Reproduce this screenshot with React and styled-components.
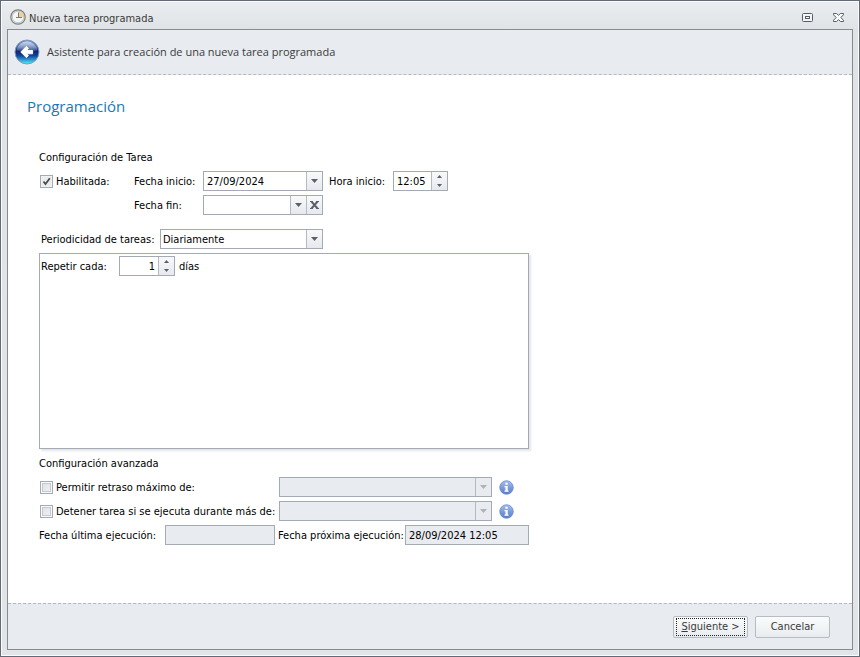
import React, { useState } from "react";
import styled, { createGlobalStyle } from "styled-components";

const GlobalStyle = createGlobalStyle`
  * {
    box-sizing: border-box;
  }
  body {
    margin: 0;
  }
  body, input, select, button {
    font-family: "DejaVu Sans Condensed", "DejaVu Sans", sans-serif;
    font-size: 11px;
    color: #000;
  }
`;

const Window = styled.div`
  display: flex;
  flex-direction: column;
  min-height: 100vh;
  padding: 0 6px 6px;
  border: 1px solid #646b78;
  box-shadow: inset 0 0 0 1px #fbfbfc;
  background: linear-gradient(#ebedf0, #dfe3e6 30px, #e1e5e8);
`;

const TitleBar = styled.div`
  display: flex;
  align-items: center;
  height: 28px;
  padding: 4px 9px 0 3px;
  gap: 3px;
`;

const Title = styled.h1`
  flex: 1;
  margin: 0;
  padding-top: 3px;
  font-size: 11px;
  font-weight: 400;
  line-height: 16px;
  color: #3b3b3b;
`;

const WindowButton = styled.button`
  display: flex;
  padding: 0;
  margin-left: 17px;
  border: 0;
  background: none;
`;

const Frame = styled.div`
  flex: 1;
  display: flex;
  flex-direction: column;
  border: 1px solid #868b90;
  background: #fff;
`;

const Header = styled.header`
  display: flex;
  align-items: center;
  gap: 7px;
  height: 45px;
  padding: 0 6px;
  border-bottom: 1px dashed #b4b8c8;
  background: #e8ebf0;
  font: 11px/18px "Open Sans", sans-serif;
  color: #3b3b3b;
`;

const BackButton = styled.button`
  display: flex;
  padding: 0;
  border: 0;
  background: none;
`;

const Content = styled.main`
  flex: 1;
  padding: 19px;
`;

const Heading = styled.h2`
  margin: 0 0 32px;
  font: 400 15px/24px "Open Sans", sans-serif;
  color: #1979b5;
`;

const Form = styled.form`
  max-width: 502px;
  padding-left: 12px;
`;

const GroupTitle = styled.h3`
  margin: 0 0 5px;
  font-size: 11px;
  font-weight: 400;
  line-height: 16px;
`;

const Row = styled.div`
  display: flex;
  align-items: center;
  height: 20px;
  margin-bottom: ${(p) => p.$bottom ?? 4}px;
  padding-left: ${(p) => p.$indent || 0}px;
  white-space: nowrap;
`;

const Label = styled.label`
  flex: none;
  width: ${(p) => (p.$width ? `${p.$width}px` : "auto")};
  margin-left: ${(p) => p.$gap || 0}px;
  padding-top: 2px;
  line-height: 16px;
`;

const CheckLabel = styled.label`
  display: flex;
  flex: none;
  align-items: center;
  gap: 3px;
  width: ${(p) => p.$width}px;
  padding-left: 1px;
`;

const Check = styled.input`
  appearance: none;
  flex: none;
  width: 13px;
  height: 13px;
  margin: 0;
  border: 1px solid #a3abb7;
  background: linear-gradient(135deg, #dcdddf, #f4f4f4);
  box-shadow: inset 0 0 0 1px #f8f9fa, inset 0 0 0 2px #c6c9cd;

  &:checked {
    background: url("data:image/svg+xml,%3Csvg xmlns='http://www.w3.org/2000/svg' viewBox='0 0 11 11'%3E%3Cpath d='M2.5 5.5L4.5 8L8.8 2.3' fill='none' stroke='%23484b50' stroke-width='1.8'/%3E%3C/svg%3E")
        center / 11px 11px no-repeat,
      #ebecee;
    box-shadow: inset 0 0 0 1px #f1f2f4;
  }
`;

const Field = styled.div`
  display: flex;
  flex: none;
  width: ${(p) => p.$width}px;
  height: 20px;
  border: 1px solid #a3a9b5;
  background: ${(p) => (p.$disabled ? "#e8ebf0" : "#fff")};
`;

const Input = styled.input`
  flex: 1;
  min-width: 0;
  padding: 0 3px;
  border: 0;
  outline: 0;
  background: none;
  text-align: ${(p) => p.$align || "left"};
`;

const Select = styled.select`
  appearance: none;
  flex: 1;
  min-width: 0;
  padding: 0 2px;
  border: 0;
  outline: 0;
  background: none;
`;

const Cell = styled.button`
  display: flex;
  align-items: center;
  justify-content: center;
  flex: none;
  width: 16px;
  padding: 0;
  border: 0;
  border-left: 1px solid #b4b9c2;
  background: ${(p) => (p.$disabled ? "none" : "linear-gradient(#f8f9fb, #e6e9ed)")};
  color: ${(p) => (p.$disabled ? "#aeb3ba" : "#5b616b")};
`;

const Spin = styled.div`
  display: flex;
  flex-direction: column;
  width: 16px;
  border-left: 1px solid #b4b9c2;
  background: linear-gradient(#f8f9fb, #e6e9ed);
`;

const SpinButton = styled.button`
  display: flex;
  align-items: center;
  justify-content: center;
  flex: 1;
  padding: 0;
  border: 0;
  background: none;
  color: #5b616b;
`;

const Panel = styled.section`
  height: 196px;
  margin-bottom: 7px;
  padding: 2px 1px;
  border: 1px solid #a3a9b5;
  box-shadow: 2px 2px 2px #e4e5e8;
`;

const InfoButton = styled.button`
  display: flex;
  margin: 1px 0 0 7px;
  padding: 0;
  border: 0;
  background: none;
`;

const Footer = styled.footer`
  display: flex;
  align-items: center;
  justify-content: flex-end;
  gap: 7px;
  height: 46px;
  padding: 0 22px 0 0;
  border-top: 1px dashed #b4b8be;
  background: #e8ebf0;
`;

const Button = styled.button`
  width: 75px;
  height: 22px;
  padding: 1px;
  border: 1px solid #b8bcc2;
  border-radius: 2px;
  background: linear-gradient(#fafbfc, #e9ecef);
  line-height: 16px;
  color: #3b3b3b;
`;

const FocusRing = styled.span`
  display: block;
  margin: 0 1px;
  border: 1px dotted #222;
`;

const Down = () => (
  <svg width="7" height="4" viewBox="0 0 7 4" aria-hidden="true">
    <path d="M0 0H7L3.5 4Z" fill="currentColor" />
  </svg>
);

const SpinArrow = ({ up }) => (
  <svg width="5" height="3" viewBox="0 0 5 3" aria-hidden="true">
    <path d={up ? "M0 3H5L2.5 0Z" : "M0 0H5L2.5 3Z"} fill="currentColor" />
  </svg>
);

const ClearIcon = () => (
  <svg width="9" height="8" viewBox="0 0 9 8" aria-hidden="true">
    <path d="M1.5 0.5L7.5 7.5M7.5 0.5L1.5 7.5" stroke="currentColor" strokeWidth="2" />
    <path d="M0 0.5H3M6 0.5H9M0 7.5H3M6 7.5H9" stroke="currentColor" />
  </svg>
);

const ClockIcon = () => (
  <svg width="16" height="16" viewBox="0 0 16 16" aria-hidden="true">
    <circle cx="8" cy="8" r="7.2" fill="#e4e5e6" stroke="#7c7c7c" strokeWidth="1.2" />
    <circle cx="8" cy="8" r="5.7" fill="#f4f6f8" stroke="#aeb2b8" strokeWidth="0.7" />
    <path d="M8 8V2.6A5.4 5.4 0 0 1 13.4 8Z" fill="#f4d189" />
    <path d="M8.5 3.5V8.5H12M6 8.5H8.5" fill="none" stroke="#5f7ea0" />
  </svg>
);

const BackIcon = () => (
  <svg width="26" height="26" viewBox="0 0 26 26" aria-hidden="true">
    <defs>
      <linearGradient id="orb" x1="0" y1="0" x2="0" y2="1">
        <stop offset="0" stopColor="#7a97c8" />
        <stop offset="0.3" stopColor="#3d60a8" />
        <stop offset="0.45" stopColor="#0b2270" />
        <stop offset="0.65" stopColor="#10439a" />
        <stop offset="1" stopColor="#4ff0ff" />
      </linearGradient>
      <linearGradient id="gloss" x1="0" y1="0" x2="0" y2="1">
        <stop offset="0" stopColor="#fff" stopOpacity="0.65" />
        <stop offset="1" stopColor="#fff" stopOpacity="0.1" />
      </linearGradient>
    </defs>
    <circle cx="13" cy="13" r="12" fill="url(#orb)" stroke="#8497bb" strokeWidth="1" />
    <path d="M2.5 11.5A10.6 10.6 0 0 1 23.5 11.5Q13 14 2.5 11.5Z" fill="url(#gloss)" />
    <path
      d="M6.8 13L12.4 7.4L14.4 9.4L12.6 11.4H18.6V14.8H12.6L14.4 16.6L12.4 18.6Z"
      fill="#fff"
      stroke="#fff"
      strokeLinejoin="round"
    />
  </svg>
);

const InfoIcon = () => (
  <svg width="15" height="15" viewBox="0 0 15 15" aria-hidden="true">
    <defs>
      <linearGradient id="info" x1="0" y1="0" x2="0" y2="1">
        <stop offset="0" stopColor="#a3bdee" />
        <stop offset="1" stopColor="#587bc9" />
      </linearGradient>
    </defs>
    <circle cx="7.5" cy="7.5" r="6.8" fill="url(#info)" stroke="#6686cb" strokeWidth="0.7" />
    <path d="M6.4 2.8H8.7V4.7H6.4ZM5.5 6H8.7V10.6H9.6V11.8H5.5V10.6H6.4V7.2H5.5Z" fill="#fff" />
  </svg>
);

const MaximizeIcon = () => (
  <svg width="11" height="9" viewBox="0 0 11 9" aria-hidden="true">
    <rect x="0.5" y="0.5" width="10" height="8" rx="1" fill="#f4f5f6" stroke="#565d67" />
    <rect x="3.5" y="3.5" width="4" height="2" fill="#fff" stroke="#565d67" />
  </svg>
);

const CloseIcon = () => (
  <svg width="11" height="9" viewBox="0 0 11 9" aria-hidden="true">
    <path
      d="M0.5 0.5H3.5L5.5 2.3L7.5 0.5H10.5V1.8L7.8 4.5L10.5 7.2V8.5H7.5L5.5 6.7L3.5 8.5H0.5V7.2L3.2 4.5L0.5 1.8Z"
      fill="#fafafa"
      stroke="#565d67"
      strokeLinejoin="round"
    />
  </svg>
);

function Spinner({ onStep }) {
  return (
    <Spin>
      <SpinButton type="button" aria-label="Aumentar" onClick={() => onStep(1)}>
        <SpinArrow up />
      </SpinButton>
      <SpinButton type="button" aria-label="Disminuir" onClick={() => onStep(-1)}>
        <SpinArrow />
      </SpinButton>
    </Spin>
  );
}

function LimitRow({ id, text }) {
  const [checked, setChecked] = useState(false);

  return (
    <Row>
      <CheckLabel $width={240}>
        <Check type="checkbox" checked={checked} onChange={(e) => setChecked(e.target.checked)} />
        <Label as="span">{text}</Label>
      </CheckLabel>
      <Field $width={213} $disabled={!checked}>
        <Select id={id} aria-label={text} disabled={!checked} />
        <Cell as="span" $disabled={!checked}>
          <Down />
        </Cell>
      </Field>
      <InfoButton type="button" aria-label="Información">
        <InfoIcon />
      </InfoButton>
    </Row>
  );
}

export default function App() {
  const [start, setStart] = useState("27/09/2024");
  const [end, setEnd] = useState("");
  const [minutes, setMinutes] = useState(12 * 60 + 5);
  const [days, setDays] = useState(1);

  const time = `${String(Math.floor(minutes / 60)).padStart(2, "0")}:${String(minutes % 60).padStart(2, "0")}`;

  return (
    <>
      <GlobalStyle />
      <Window>
        <TitleBar>
          <ClockIcon />
          <Title>Nueva tarea programada</Title>
          <WindowButton aria-label="Maximizar">
            <MaximizeIcon />
          </WindowButton>
          <WindowButton aria-label="Cerrar">
            <CloseIcon />
          </WindowButton>
        </TitleBar>
        <Frame>
          <Header>
            <BackButton aria-label="Atrás">
              <BackIcon />
            </BackButton>
            Asistente para creación de una nueva tarea programada
          </Header>
          <Content>
            <Heading>Programación</Heading>
            <Form id="task" onSubmit={(e) => e.preventDefault()}>
              <GroupTitle>Configuración de Tarea</GroupTitle>
              <Row>
                <CheckLabel $width={95}>
                  <Check type="checkbox" defaultChecked />
                  <Label as="span">Habilitada:</Label>
                </CheckLabel>
                <Label htmlFor="start" $width={69}>Fecha inicio:</Label>
                <Field $width={120}>
                  <Input id="start" value={start} onChange={(e) => setStart(e.target.value)} />
                  <Cell type="button" aria-label="Abrir calendario">
                    <Down />
                  </Cell>
                </Field>
                <Label htmlFor="time" $width={64} $gap={6}>Hora inicio:</Label>
                <Field $width={55}>
                  <Input id="time" value={time} readOnly />
                  <Spinner onStep={(n) => setMinutes((minutes + n + 1440) % 1440)} />
                </Field>
              </Row>
              <Row $indent={95} $bottom={14}>
                <Label htmlFor="end" $width={69}>Fecha fin:</Label>
                <Field $width={120}>
                  <Input id="end" value={end} onChange={(e) => setEnd(e.target.value)} />
                  <Cell type="button" aria-label="Abrir calendario">
                    <Down />
                  </Cell>
                  <Cell type="button" aria-label="Borrar" onClick={() => setEnd("")}>
                    <ClearIcon />
                  </Cell>
                </Field>
              </Row>
              <Row $indent={2}>
                <Label htmlFor="period" $width={119}>Periodicidad de tareas:</Label>
                <Field $width={163}>
                  <Select id="period">
                    <option>Diariamente</option>
                  </Select>
                  <Cell as="span">
                    <Down />
                  </Cell>
                </Field>
              </Row>
              <Panel>
                <Row $bottom={0}>
                  <Label htmlFor="days" $width={78}>Repetir cada:</Label>
                  <Field $width={56}>
                    <Input id="days" $align="right" value={days} readOnly />
                    <Spinner onStep={(n) => setDays(Math.max(1, days + n))} />
                  </Field>
                  <Label htmlFor="days" $gap={4}>días</Label>
                </Row>
              </Panel>
              <GroupTitle>Configuración avanzada</GroupTitle>
              <LimitRow id="delay" text="Permitir retraso máximo de:" />
              <LimitRow id="stop" text="Detener tarea si se ejecuta durante más de:" />
              <Row>
                <Label htmlFor="last" $width={126}>Fecha última ejecución:</Label>
                <Field $width={110} $disabled>
                  <Input id="last" readOnly />
                </Field>
                <Label htmlFor="next" $width={127} $gap={3}>Fecha próxima ejecución:</Label>
                <Field $width={124} $disabled>
                  <Input id="next" value="28/09/2024 12:05" readOnly />
                </Field>
              </Row>
            </Form>
          </Content>
          <Footer>
            <Button type="submit" form="task">
              <FocusRing>
                <u>S</u>iguiente &gt;
              </FocusRing>
            </Button>
            <Button type="button">Cancelar</Button>
          </Footer>
        </Frame>
      </Window>
    </>
  );
}
